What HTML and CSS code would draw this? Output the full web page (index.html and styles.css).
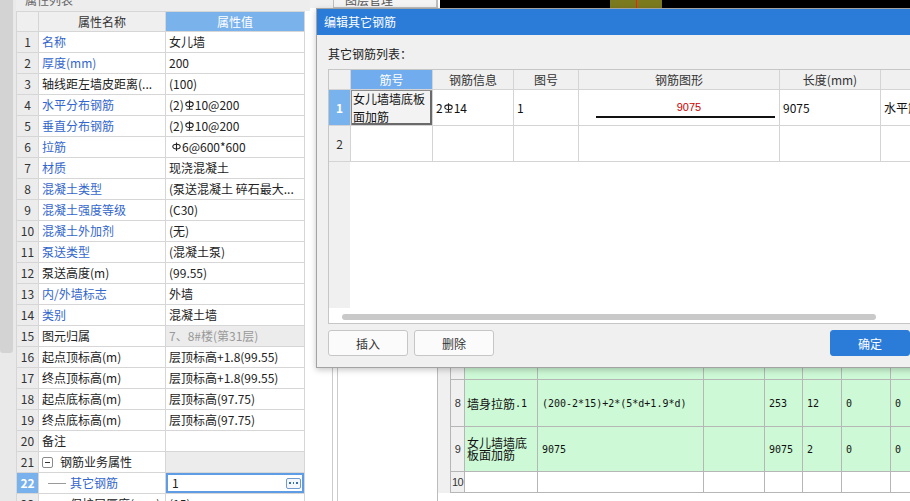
FILE: index.html
```html
<!DOCTYPE html>
<html lang="zh-CN">
<head>
<meta charset="utf-8">
<title>编辑其它钢筋</title>
<link rel="stylesheet" href="styles.css">
</head>
<body>
<div class="app">
  <aside class="sidebar"><div class="thumb"></div></aside>

  <section class="props">
    <div class="panel-title"><span>属性列表</span></div>
    <div class="pgrid">
      <div class="ph"></div><div class="ph">属性名称</div><div class="ph ph-sel">属性值</div>
      <div class="pn">1</div><div class="pk blue">名称</div><div class="pv">女儿墙</div>
      <div class="pn">2</div><div class="pk blue">厚度(mm)</div><div class="pv">200</div>
      <div class="pn">3</div><div class="pk">轴线距左墙皮距离(...</div><div class="pv">(100)</div>
      <div class="pn">4</div><div class="pk blue">水平分布钢筋</div><div class="pv">(2)<svg class="rb" viewBox="0 0 9 10" width="9" height="10"><ellipse cx="4.5" cy="4.2" rx="3.7" ry="2.3"/><path d="M4.5 0.3V9.3M1.3 9.3H7.7"/></svg>10@200</div>
      <div class="pn">5</div><div class="pk blue">垂直分布钢筋</div><div class="pv">(2)<svg class="rb" viewBox="0 0 9 10" width="9" height="10"><ellipse cx="4.5" cy="4.2" rx="3.7" ry="2.3"/><path d="M4.5 0.3V9.3M1.3 9.3H7.7"/></svg>10@200</div>
      <div class="pn">6</div><div class="pk blue">拉筋</div><div class="pv"><svg class="rb rb1" viewBox="0 0 9 10" width="9" height="10"><ellipse cx="4.5" cy="4.6" rx="3.7" ry="2.4"/><path d="M4.5 0.5V9"/></svg>6@600*600</div>
      <div class="pn">7</div><div class="pk blue">材质</div><div class="pv">现浇混凝土</div>
      <div class="pn">8</div><div class="pk blue">混凝土类型</div><div class="pv">(泵送混凝土 碎石最大...</div>
      <div class="pn">9</div><div class="pk blue">混凝土强度等级</div><div class="pv">(C30)</div>
      <div class="pn">10</div><div class="pk blue">混凝土外加剂</div><div class="pv">(无)</div>
      <div class="pn">11</div><div class="pk blue">泵送类型</div><div class="pv">(混凝土泵)</div>
      <div class="pn">12</div><div class="pk">泵送高度(m)</div><div class="pv">(99.55)</div>
      <div class="pn">13</div><div class="pk blue">内/外墙标志</div><div class="pv">外墙</div>
      <div class="pn">14</div><div class="pk blue">类别</div><div class="pv">混凝土墙</div>
      <div class="pn">15</div><div class="pk">图元归属</div><div class="pv muted">7、8#楼(第31层)</div>
      <div class="pn">16</div><div class="pk">起点顶标高(m)</div><div class="pv">层顶标高+1.8(99.55)</div>
      <div class="pn">17</div><div class="pk">终点顶标高(m)</div><div class="pv">层顶标高+1.8(99.55)</div>
      <div class="pn">18</div><div class="pk">起点底标高(m)</div><div class="pv">层顶标高(97.75)</div>
      <div class="pn">19</div><div class="pk">终点底标高(m)</div><div class="pv">层顶标高(97.75)</div>
      <div class="pn">20</div><div class="pk">备注</div><div class="pv"></div>
      <div class="pn">21</div><div class="pk"><span class="mbox"></span>钢筋业务属性</div><div class="pv shade"></div>
      <div class="pn sel">22</div><div class="pk tree blue">其它钢筋</div><div class="pv edit"><span>1</span><span class="more"><i></i><i></i><i></i></span></div>
      <div class="pn">23</div><div class="pk tree">保护层厚度(mm)</div><div class="pv">(15)</div>
    </div>
  </section>

  <section class="middle">
    <div class="mid-top"><div class="layer-btn"><span>图层管理</span></div></div>
    <div class="mid-body"><div class="mb-a"></div><div class="mb-b"></div><div class="mb-c"></div></div>
  </section>

  <section class="right">
    <div class="canvas"><div class="olive"><i class="redline"></i></div></div>
    <div class="rtable">
      <div class="rc rn"></div><div class="rc"></div><div class="rc"></div><div class="rc"></div><div class="rc"></div><div class="rc"></div><div class="rc"></div><div class="rc"></div>
      <div class="rc rn">8</div><div class="rc">墙身拉筋<span class="mono">.1</span></div><div class="rc mono">(200-2*15)+2*(5*d+1.9*d)</div><div class="rc"></div><div class="rc mono">253</div><div class="rc mono">12</div><div class="rc mono">0</div><div class="rc mono">0</div>
      <div class="rc rn">9</div><div class="rc two">女儿墙墙底<br>板面加筋</div><div class="rc mono">9075</div><div class="rc"></div><div class="rc mono">9075</div><div class="rc mono">2</div><div class="rc mono">0</div><div class="rc mono">0</div>
      <div class="rc rn">10</div><div class="rc rw"></div><div class="rc rw"></div><div class="rc rw"></div><div class="rc rw"></div><div class="rc rw"></div><div class="rc rw"></div><div class="rc rw"></div>
    </div>
  </section>
</div>

<div class="dialog">
  <div class="dlg-title">编辑其它钢筋</div>
  <div class="dlg-body">
    <div class="dlg-label">其它钢筋列表：</div>
    <div class="dtable">
      <div class="dgrid">
        <div class="dh"></div><div class="dh dh-sel">筋号</div><div class="dh">钢筋信息</div><div class="dh">图号</div><div class="dh">钢筋图形</div><div class="dh">长度(mm)</div><div class="dh"></div>
        <div class="dc dn sel">1</div>
        <div class="dc selcell">女儿墙墙底板<br>面加筋</div>
        <div class="dc">2<svg class="rb" viewBox="0 0 9 10" width="9" height="10"><ellipse cx="4.5" cy="4.2" rx="3.7" ry="2.3"/><path d="M4.5 0.3V9.3M1.3 9.3H7.7"/></svg>14</div>
        <div class="dc">1</div>
        <div class="dc fig"><div class="fig-num">9075</div><div class="fig-line"></div></div>
        <div class="dc">9075</div>
        <div class="dc">水平筋</div>
        <div class="dc dn">2</div><div class="dc"></div><div class="dc"></div><div class="dc"></div><div class="dc"></div><div class="dc"></div><div class="dc"></div>
      </div>
      <div class="drest"><div class="drest-num"></div></div>
      <div class="dscroll"><div class="dthumb"></div></div>
    </div>
    <div class="dlg-btns">
      <button class="btn">插入</button>
      <button class="btn">删除</button>
      <button class="btn primary">确定</button>
    </div>
  </div>
</div>
</body>
</html>
```

FILE: styles.css
```css
* { box-sizing: border-box; margin: 0; padding: 0; }
html, body { width: 910px; height: 501px; overflow: hidden; background: #fff; }
body {
  position: relative;
  font-family: "Noto Sans CJK SC", "Noto Sans", sans-serif;
  font-size: 12px;
  color: #222;
}

.app { display: flex; height: 501px; }

/* left scroll strip */
.sidebar { width: 16px; flex: none; background: #e9e9e9; }
.thumb { width: 13px; height: 353px; background: #d3d3d3; border-radius: 0 0 3px 3px; }

/* property panel */
.props { width: 294px; flex: none; background: #fff; display: flex; flex-direction: column; }
.panel-title { height: 11px; flex: none; background: #ededed; overflow: hidden; color: #666; padding-left: 9px; }
.panel-title span { display: block; line-height: 14px; margin-top: -7px; }

.pgrid {
  display: grid;
  grid-template-columns: 21px 126px 138px;
  grid-template-rows: 19px;
  grid-auto-rows: 20px;
  gap: 1px;
  padding: 1px;
  width: 289px;
  background: #d6d6d6;
}
.pgrid > div { background: #fff; line-height: 20px; padding-left: 3px; white-space: nowrap; overflow: hidden; }
.pgrid > .ph { background: #efefef; text-align: center; line-height: 19px; color: #333; padding: 0; }
.pgrid > .ph-sel { background: #7ab2ec; color: #fff; }
.pgrid > .pn { background: #ececec; text-align: center; padding: 0; color: #333; }
.pgrid > .pn.sel { background: #79b1ec; color: #fff; font-weight: bold; }
.blue { color: #3366cc; }
.pgrid > .pv.muted { background: #ececec; color: #999; }
.pgrid > .pv.shade { background: #ececec; }
.rb { fill: none; stroke: #222; stroke-width: 1.1; vertical-align: 0; margin: 0 1px 0 1px; }
.rb1 { margin-left: 3px; }

.mbox {
  display: inline-block; position: relative;
  width: 11px; height: 11px; margin: 0 7px 0 0;
  border: 1px solid #8a8a8a; border-radius: 2px;
  vertical-align: -1px; background: #fff;
}
.mbox::after { content: ""; position: absolute; left: 2px; right: 2px; top: 4px; height: 1px; background: #333; }

.pgrid > .pk.tree { position: relative; padding-left: 31px; }
.pgrid > .pk.tree::before { content: ""; position: absolute; left: 9px; width: 18px; top: 10px; height: 1px; background: #9a9a9a; }

.pgrid > .pv.edit {
  display: flex; align-items: center; justify-content: space-between;
  padding-left: 6px; padding-right: 3px;
  box-shadow: inset 0 0 0 2px #5e9de6;
}
.more {
  display: flex; align-items: center; justify-content: center; gap: 2px;
  width: 15px; height: 11px; border: 1px solid #6f9bd0; border-radius: 2px; background: #f4f8fd;
}
.more i { width: 1.5px; height: 1.5px; background: #3a6db0; }

/* middle panel */
.middle { width: 127px; flex: none; display: flex; flex-direction: column; background: #fff; }
.mid-top { height: 8px; flex: none; display: flex; background: #f0f0f0; overflow: hidden; }
.layer-btn { margin-left: 23px; flex: 1; border: 1px solid #bdbdbd; border-top: none; background: #f3f3f3; color: #555; padding-left: 11px; overflow: hidden; }
.layer-btn span { display: block; line-height: 14px; margin-top: -7px; }
.mid-body { flex: 1; display: flex; }
.mb-a { width: 22px; }
.mb-b { width: 5px; border-left: 1px solid #cbcbcb; }
.mb-c { flex: 1; border-left: 1px solid #cbcbcb; }

/* right area */
.right { flex: 1; display: flex; flex-direction: column; overflow: hidden; background: #fff; border-left: 1px solid #bcbcbc; }
.canvas { height: 340px; flex: none; margin-left: 2px; background: #000; position: relative; }
.olive { position: absolute; left: 170px; top: 0; width: 52px; height: 30px; background: #7b7a1f; }
.redline { position: absolute; left: 26px; top: 0; width: 1px; height: 100%; background: #ff1a1a; }

.rtable {
  display: grid;
  grid-template-columns: 13px 72px 165px 60px 37px 38px 48px 60px;
  grid-template-rows: 39px 46px 44px 20px;
  gap: 1px;
  padding: 0 0 1px 1px;
  width: max-content;
  background: #b6b6b6;
  box-shadow: -12px 0 0 #f0f0f0;
  margin-left: 12px;
}
.rc { background: #cdf9d6; display: flex; align-items: center; padding-left: 2px; white-space: nowrap; overflow: hidden; font-size: 12px; color: #111; }
.rc.rn { background: #f0f0f0; justify-content: center; padding: 0; font-family: "Liberation Sans", sans-serif; font-size: 11px; letter-spacing: -0.5px; color: #333; }
.rc.rw { background: #fff; }
.rc.two { line-height: 12px; white-space: normal; }
.mono { font-family: "DejaVu Sans Mono", "Liberation Mono", monospace; font-size: 10px; }
.rc.mono { padding-left: 4px; }

/* dialog */
.dialog {
  position: absolute; left: 316px; top: 8px;
  width: 620px; height: 360px;
  background: #f0f0f0;
  border: 1px solid #a3a3a3;
  box-shadow: 0 2px 6px rgba(0, 0, 0, 0.22);
  display: flex; flex-direction: column;
}
.dlg-title { height: 26px; flex: none; background: #2b7cd9; color: #fff; line-height: 26px; padding-left: 7px; }
.dlg-body { flex: 1; padding: 0 11px 0 11px; display: flex; flex-direction: column; }
.dlg-label { padding-top: 12px; line-height: 14px; color: #222; }

.dtable {
  margin-top: 8px; height: 255px; flex: none;
  border: 1px solid #c6c6c6; background: #fff;
  display: flex; flex-direction: column; overflow: hidden;
}
.dgrid {
  display: grid;
  grid-template-columns: 21px 81px 80px 64px 200px 100px 100px;
  grid-template-rows: 19px 35px 35px;
  gap: 1px;
  padding-bottom: 1px;
  width: max-content;
  background: #d4d4d4;
}
.dh { background: #f0f0f0; text-align: center; line-height: 19px; color: #333; white-space: nowrap; }
.dh.dh-sel { background: #71acee; color: #fff; }
.dc { background: #fff; display: flex; align-items: center; padding-left: 3px; white-space: nowrap; overflow: hidden; color: #111; }
.dc.dn { background: #f0f0f0; justify-content: center; padding: 0; color: #333; }
.dc.dn.sel { background: #79b3ee; color: #fff; font-weight: bold; }
.dc.selcell {
  background: #f3f3f3; padding-left: 2px; line-height: 18px; white-space: normal;
  box-shadow: inset 1px 1px 0 #8c8c8c, inset -2px -2px 0 #6a6a6a;
}
.dc.fig { flex-direction: column; align-items: stretch; justify-content: center; padding: 3px 3px 0 17px; }
.fig-num { color: #cc0000; font-family: "Liberation Sans", sans-serif; font-size: 11px; line-height: 12px; text-align: center; padding-left: 6px; }
.fig-line { height: 2px; width: 179px; background: #111; margin-top: 3px; }
.drest { flex: 1; display: flex; }
.drest-num { width: 21px; background: #f0f0f0; }
.dscroll { height: 15px; flex: none; padding: 6px 0 0 13px; }
.dthumb { width: 534px; height: 6px; border-radius: 3px; background: #c9c9c9; }

.dlg-btns { display: flex; gap: 6px; margin-top: 6px; height: 26px; }
.btn {
  width: 80px; height: 26px;
  font-family: inherit; font-size: 12px; color: #333;
  background: #fbfbfb; border: 1px solid #c6c6c6; border-radius: 3px;
}
.btn.primary { margin-left: auto; margin-right: 14px; width: 80px; background: #2b7cd9; border-color: #2b7cd9; color: #fff; }
```
